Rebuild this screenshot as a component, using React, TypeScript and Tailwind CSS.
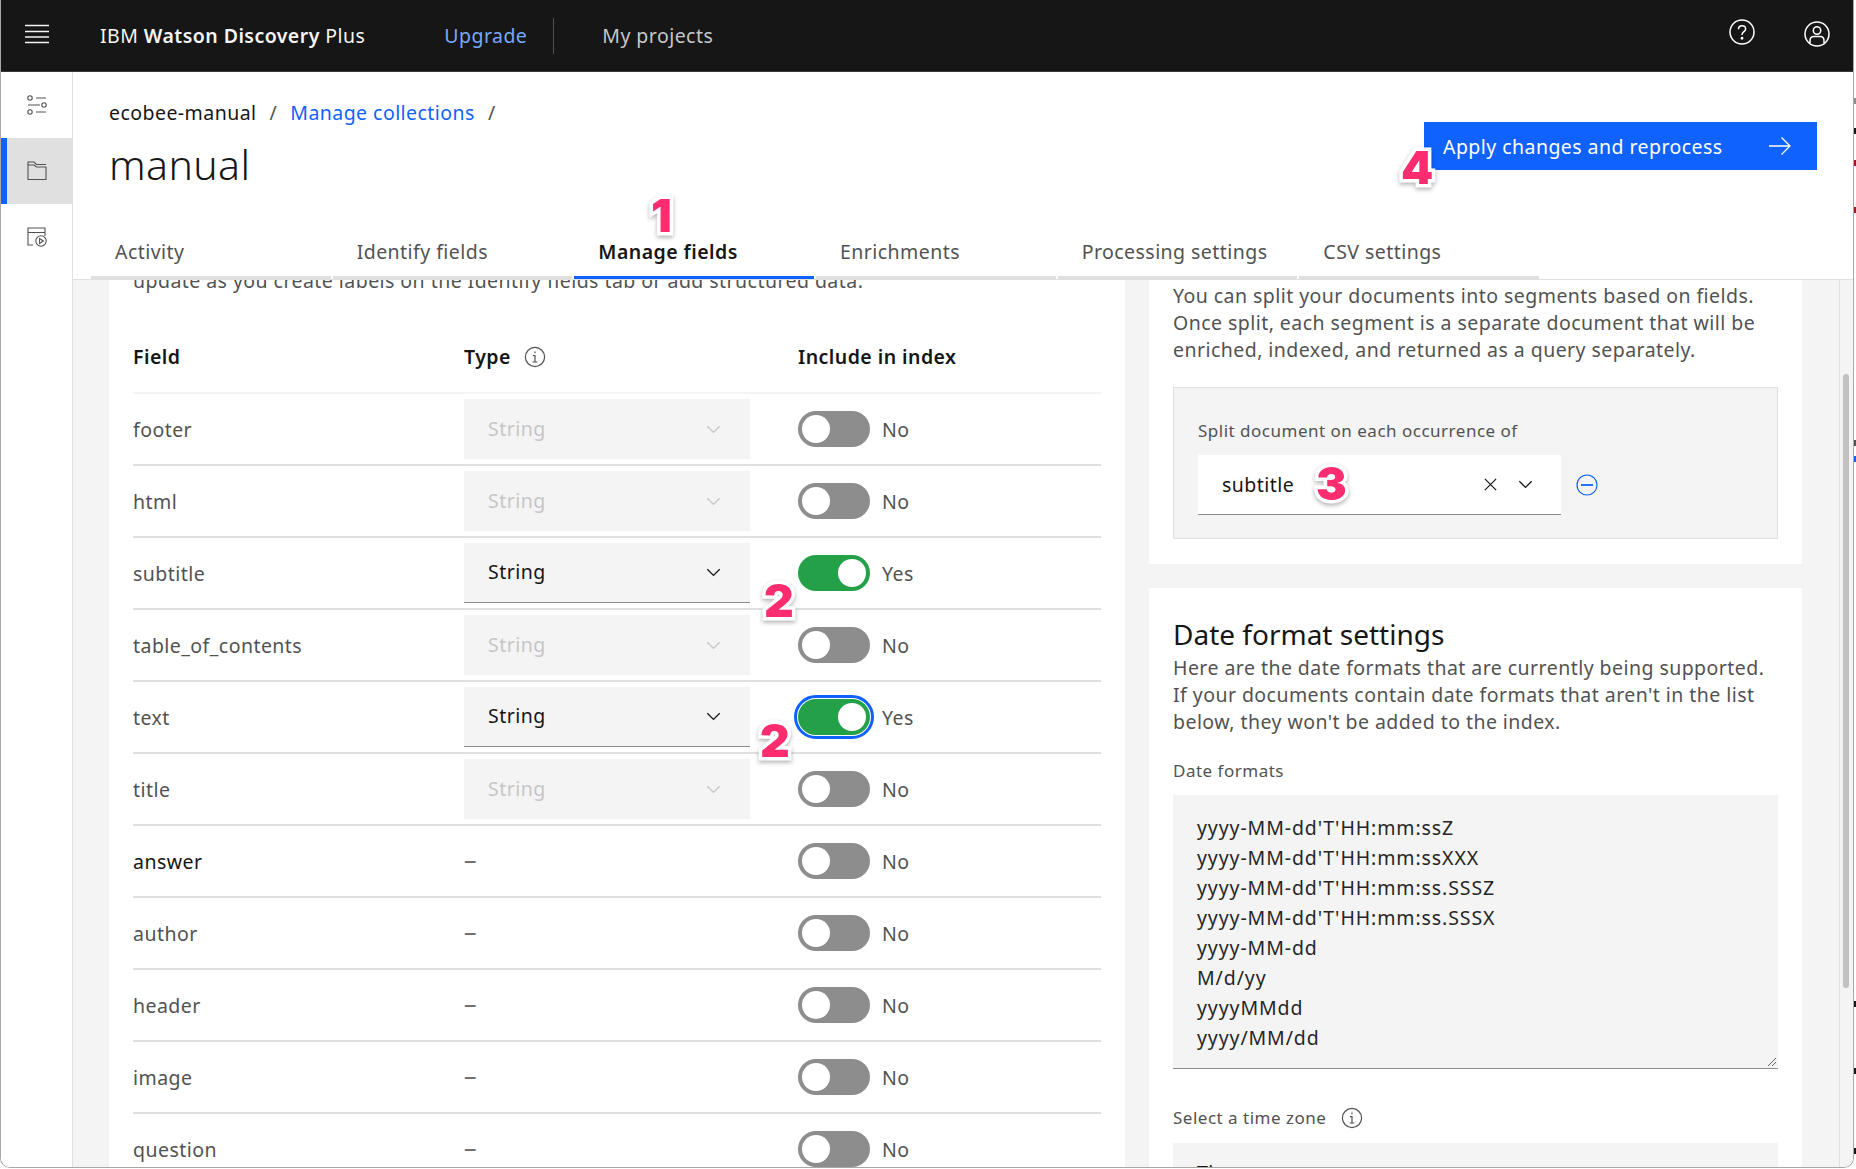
import React from "react";

const font = { fontFamily: '"Noto Sans", sans-serif' };

function Chevron({ className = "" }: { className?: string }) {
  return (
    <svg viewBox="0 0 20 20" className={"w-[19px] h-[19px] " + className} fill="none" stroke="currentColor" strokeWidth="1.4">
      <path d="M3.5 6.5 10 13l6.5-6.5" />
    </svg>
  );
}

function Info({ className = "" }: { className?: string }) {
  return (
    <svg viewBox="0 0 22 22" className={"w-[22px] h-[22px] " + className} fill="none" stroke="#525252" strokeWidth="1.2">
      <circle cx="11" cy="11" r="9.6" />
      <path d="M8.6 16h4.8M11 16V9.6H9M11 5.6v1.6" />
    </svg>
  );
}

function Toggle({ on, focus }: { on: boolean; focus?: boolean }) {
  return (
    <div
      className={
        "w-[72px] h-[36px] rounded-full flex items-center px-[4px] " +
        (on ? "bg-[#24a148] justify-end " : "bg-[#8d8d8d] justify-start ") +
        (focus ? "outline-[3px] outline-solid outline-[#0f62fe] outline-offset-[1px]" : "")
      }
    >
      <div className="w-[28px] h-[28px] rounded-full bg-white" />
    </div>
  );
}

type Row = { name: string; type: "off" | "on" | "none"; on?: boolean; focus?: boolean; dark?: boolean };

const rows: Row[] = [
  { name: "footer", type: "off" },
  { name: "html", type: "off" },
  { name: "subtitle", type: "on", on: true },
  { name: "table_of_contents", type: "off" },
  { name: "text", type: "on", on: true, focus: true },
  { name: "title", type: "off" },
  { name: "answer", type: "none", dark: true },
  { name: "author", type: "none" },
  { name: "header", type: "none" },
  { name: "image", type: "none" },
  { name: "question", type: "none" },
];

function FieldRow({ r }: { r: Row }) {
  return (
    <div className="grid grid-cols-[331px_334px_1fr] items-center h-[72px] shrink-0 border-b-2 border-[#e0e0e0]">
      <div className={r.dark ? "text-[#161616]" : "text-[#525252]"}>{r.name}</div>
      <div>
        {r.type === "none" ? (
          <span className="text-[#6f6f6f] text-[25px] leading-none">–</span>
        ) : (
          <div
            className={
              "w-[286px] h-[60px] bg-[#f4f4f4] flex items-center justify-between pl-[24px] pr-[27px] " +
              (r.type === "on" ? "border-b border-[#8d8d8d] text-[#161616]" : "text-[#c6c6c6]")
            }
          >
            <span className="-mt-[2px]">String</span>
            <Chevron />
          </div>
        )}
      </div>
      <div className="flex items-center gap-[12px] text-[#525252]">
        <Toggle on={!!r.on} focus={r.focus} />
        <span>{r.on ? "Yes" : "No"}</span>
      </div>
    </div>
  );
}

function Tab({ label, active }: { label: string; active?: boolean }) {
  return (
    <div
      className={
        "flex-1 h-[48px] pl-[24px] pt-[7px] leading-[27px] border-b-[3px] " +
        (active ? "border-[#0f62fe] text-[#161616] font-semibold" : "border-[#e0e0e0] text-[#525252]")
      }
    >
      {label}
    </div>
  );
}

function Digit({ children, className }: { children: React.ReactNode; className: string }) {
  return (
    <div
      className={
        "absolute z-20 text-[46px] leading-none font-black tracking-normal text-[#ff2d6f] [-webkit-text-stroke:7px_white] [paint-order:stroke_fill] drop-shadow-[0_2px_2px_rgba(0,0,0,0.3)] " +
        className
      }
      style={{ fontFamily: "Inter, sans-serif" }}
    >
      {children}
    </div>
  );
}

function Speck({ className }: { className: string }) {
  return <div className={"absolute right-0 w-[2px] h-[6px] " + className} />;
}

const formats = [
  "yyyy-MM-dd'T'HH:mm:ssZ",
  "yyyy-MM-dd'T'HH:mm:ssXXX",
  "yyyy-MM-dd'T'HH:mm:ss.SSSZ",
  "yyyy-MM-dd'T'HH:mm:ss.SSSX",
  "yyyy-MM-dd",
  "M/d/yy",
  "yyyyMMdd",
  "yyyy/MM/dd",
];

export default function App() {
  return (
    <div className="relative w-[1856px] h-[1169px] overflow-hidden bg-white text-[19.5px] leading-[27px] tracking-[0.45px]" style={font}>
      <div className="w-[1854px] h-[1168px] flex flex-col overflow-hidden rounded-b-[10px] border-x border-b border-[#a8a8a8] bg-white">
        {/* top bar */}
        <header className="h-[72px] shrink-0 bg-[#161616] border-b border-[#393939] flex items-center text-[#e0e0e0]">
          <svg viewBox="0 0 24 20" className="ml-[24px] w-[24px] h-[20px] -mt-[3px]" stroke="#f4f4f4" strokeWidth="1.4">
            <path d="M0 1.5h24M0 7.5h24M0 13h24M0 18.5h24" />
          </svg>
          <div className="ml-[51px] text-[#f4f4f4] whitespace-nowrap">
            IBM <span className="font-semibold">Watson Discovery</span> Plus
          </div>
          <div className="ml-[79px] text-[#78a9ff]">Upgrade</div>
          <div className="ml-[26px] w-px h-[36px] bg-[#525252]" />
          <div className="ml-[48px] text-[#c6c6c6]">My projects</div>
          <div className="ml-auto flex items-center gap-[49px] mr-[23px]">
            <svg viewBox="0 0 26 26" className="w-[26px] h-[26px] -mt-[7px]" fill="none" stroke="white" strokeWidth="1.5">
              <circle cx="13" cy="13" r="12" />
              <path d="M9.5 10.2c0-2 1.5-3.4 3.6-3.4s3.5 1.3 3.5 3.1c0 2.8-3.6 2.7-3.6 6" />
              <circle cx="13" cy="19.3" r="0.7" fill="white" />
            </svg>
            <svg viewBox="0 0 26 26" className="w-[26px] h-[26px] -mt-[3px]" fill="none" stroke="white" strokeWidth="1.5">
              <circle cx="13" cy="13" r="12" />
              <circle cx="13" cy="9.5" r="3.7" />
              <path d="M6 22v-2.2C6 17 8 15.6 10 15.6h6c2 0 4 1.4 4 4.2V22" />
            </svg>
          </div>
        </header>

        <div className="flex-1 flex min-h-0">
          {/* side nav */}
          <nav className="w-[72px] shrink-0 border-r border-[#e0e0e0] bg-white text-[#525252]">
            <div className="h-[66px] flex items-center justify-center">
              <svg viewBox="0 0 20 20" className="w-[20px] h-[20px]" fill="none" stroke="currentColor" strokeWidth="1.1">
                <circle cx="3" cy="3" r="2.2" />
                <circle cx="17" cy="10" r="2.2" />
                <circle cx="3" cy="17" r="2.2" />
                <path d="M9 3h10M1 10h12M9 17h10" />
              </svg>
            </div>
            <div className="h-[66px] flex items-center justify-center bg-[#e0e0e0] border-l-[6px] border-[#0f62fe] pr-[6px]">
              <svg viewBox="0 0 20 20" className="w-[20px] h-[20px]" fill="none" stroke="currentColor" strokeWidth="1.1">
                <path d="M1 4V1h6l2.5 2.5H19" />
                <path d="M1 4v14.5h18V6H9.5L7 4z" />
              </svg>
            </div>
            <div className="h-[66px] flex items-center justify-center">
              <svg viewBox="0 0 20 20" className="w-[20px] h-[20px]" fill="none" stroke="currentColor" strokeWidth="1.1">
                <path d="M6 18H1V1h17v8M1 5.5h17" />
                <circle cx="14" cy="14" r="5.2" />
                <path d="M12.6 11.5v5l3.8-2.5z" />
              </svg>
            </div>
          </nav>

          <div className="flex-1 min-w-0 flex flex-col">
            {/* page header */}
            <div className="h-[208px] shrink-0 flex flex-col border-b border-[#e0e0e0] bg-white relative z-10">
              <div className="flex justify-between">
                <div className="pl-[36px] pt-[28px]">
                  <div className="flex items-center text-[#161616] leading-[26px]">
                    <span>ecobee-manual</span>
                    <span className="mx-[13px] text-[#525252]">/</span>
                    <span className="text-[#0f62fe]">Manage collections</span>
                    <span className="mx-[13px] text-[#525252]">/</span>
                  </div>
                  <div className="mt-[12px] text-[41px] leading-[52px] text-[#161616] font-light tracking-[0.4px]">manual</div>
                </div>
                <div className="mt-[50px] mr-[36px] w-[393px] h-[48px] bg-[#0f62fe] text-white flex items-center justify-between pl-[19px] pr-[26px]">
                  <span>Apply changes and reprocess</span>
                  <svg viewBox="0 0 22 20" className="w-[22px] h-[20px]" fill="none" stroke="white" strokeWidth="1.3">
                    <path d="M0 10h21M12.5 1.5 21 10l-8.5 8.5" />
                  </svg>
                </div>
              </div>
              <div className="mt-auto ml-[18px] w-[1448px] flex gap-[2px]">
                <Tab label="Activity" />
                <Tab label="Identify fields" />
                <Tab label="Manage fields" active />
                <Tab label="Enrichments" />
                <Tab label="Processing settings" />
                <Tab label="CSV settings" />
              </div>
            </div>

            {/* content */}
            <div className="flex-1 min-h-0 flex bg-[#f4f4f4] overflow-hidden">
              <div className="w-[1766px] shrink-0 pl-[36px] flex gap-[24px] items-start">
                {/* fields */}
                <div className="w-[1016px] shrink-0 bg-white px-[24px] -mt-[13px] text-[#525252]">
                  <div className="whitespace-nowrap leading-[27px]">
                    update as you create labels on the Identify fields tab or add structured data.
                  </div>
                  <div className="grid grid-cols-[331px_334px_1fr] items-end h-[100px] pb-[22px] border-b-2 border-[#f4f4f4] font-semibold text-[#161616]">
                    <div>Field</div>
                    <div className="flex items-center gap-[13px]">
                      Type <Info />
                    </div>
                    <div>Include in index</div>
                  </div>
                  {rows.map((r) => (
                    <FieldRow key={r.name} r={r} />
                  ))}
                </div>

                {/* settings */}
                <div className="w-[653px] shrink-0 flex flex-col gap-[24px]">
                  <div className="bg-white px-[24px] pt-[2px] pb-[25px] text-[#525252]">
                    <p>
                      You can split your documents into segments based on fields.
                      <br />
                      Once split, each segment is a separate document that will be
                      <br />
                      enriched, indexed, and returned as a query separately.
                    </p>
                    <div className="mt-[24px] h-[152px] bg-[#f4f4f4] border border-[#e0e0e0] pl-[24px] pt-[33px]">
                      <div className="text-[17px] leading-[20px] tracking-[0.5px]">Split document on each occurrence of</div>
                      <div className="mt-[14px] flex items-center">
                        <div className="w-[363px] h-[60px] bg-white border-b border-[#8d8d8d] flex items-center pl-[24px] pr-[26px] text-[#161616]">
                          <span>subtitle</span>
                          <svg viewBox="0 0 16 16" className="ml-auto w-[15px] h-[15px]" fill="none" stroke="#161616" strokeWidth="1.3">
                            <path d="M2 2l12 12M14 2 2 14" />
                          </svg>
                          <Chevron className="ml-[18px]" />
                        </div>
                        <svg viewBox="0 0 22 22" className="ml-[15px] w-[22px] h-[22px]" fill="none" stroke="#0f62fe">
                          <circle cx="11" cy="11" r="10" strokeWidth="1.2" />
                          <path d="M5 11h12" strokeWidth="1.8" />
                        </svg>
                      </div>
                    </div>
                  </div>

                  <div className="bg-white px-[24px] pt-[28px] text-[#525252] h-[600px]">
                    <h2 className="text-[28px] leading-[36px] text-[#161616] tracking-normal">Date format settings</h2>
                    <p className="mt-[2px]">
                      Here are the date formats that are currently being supported.
                      <br />
                      If your documents contain date formats that aren't in the list
                      <br />
                      below, they won't be added to the index.
                    </p>
                    <div className="mt-[26px] text-[17px] leading-[20px] tracking-[0.5px]">Date formats</div>
                    <div className="relative mt-[14px] h-[274px] bg-[#f4f4f4] border-b border-[#8d8d8d] pl-[24px] pt-[18px] leading-[30px] tracking-[0.9px] text-[#262626]">
                      {formats.map((f) => (
                        <div key={f}>{f}</div>
                      ))}
                      <svg viewBox="0 0 10 10" className="absolute right-[1px] bottom-[1px] w-[10px] h-[10px]" stroke="#525252" strokeWidth="0.9">
                        <path d="M1 9 9 1M5 9l4-4" />
                      </svg>
                    </div>
                    <div className="mt-[38px] flex items-center gap-[15px] text-[17px] leading-[20px] tracking-[0.5px]">
                      Select a time zone <Info className="w-[21px] h-[21px]" />
                    </div>
                    <div className="mt-[14px] h-[60px] bg-[#f4f4f4] pl-[24px] pt-[16px] text-[#161616]">Time zone</div>
                  </div>
                </div>
              </div>

              {/* scrollbar */}
              <div className="flex-1 border-l border-[#e0e0e0] pt-[94px] pl-[3px]">
                <div className="w-[6px] h-[614px] rounded-full bg-[#c1c1c1]" />
              </div>
            </div>
          </div>
        </div>
      </div>

      <Digit className="left-[651px] top-[192px]">1</Digit>
      <Digit className="left-[764px] top-[577px]">2</Digit>
      <Digit className="left-[760px] top-[717px]">2</Digit>
      <Digit className="left-[1316px] top-[460px]">3</Digit>
      <Digit className="left-[1401px] top-[144px]">4</Digit>

      <Speck className="top-[98px] bg-[#8d8d8d]" />
      <Speck className="top-[128px] bg-[#161616]" />
      <Speck className="top-[160px] bg-[#a2191f]" />
      <Speck className="top-[207px] bg-[#a2191f]" />
      <Speck className="top-[440px] bg-[#525252]" />
      <Speck className="top-[456px] h-[2px] bg-[#0f62fe]" />
      <Speck className="top-[1001px] bg-[#161616]" />
      <Speck className="top-[1068px] bg-[#161616]" />
      <Speck className="top-[1148px] bg-[#161616]" />
    </div>
  );
}
